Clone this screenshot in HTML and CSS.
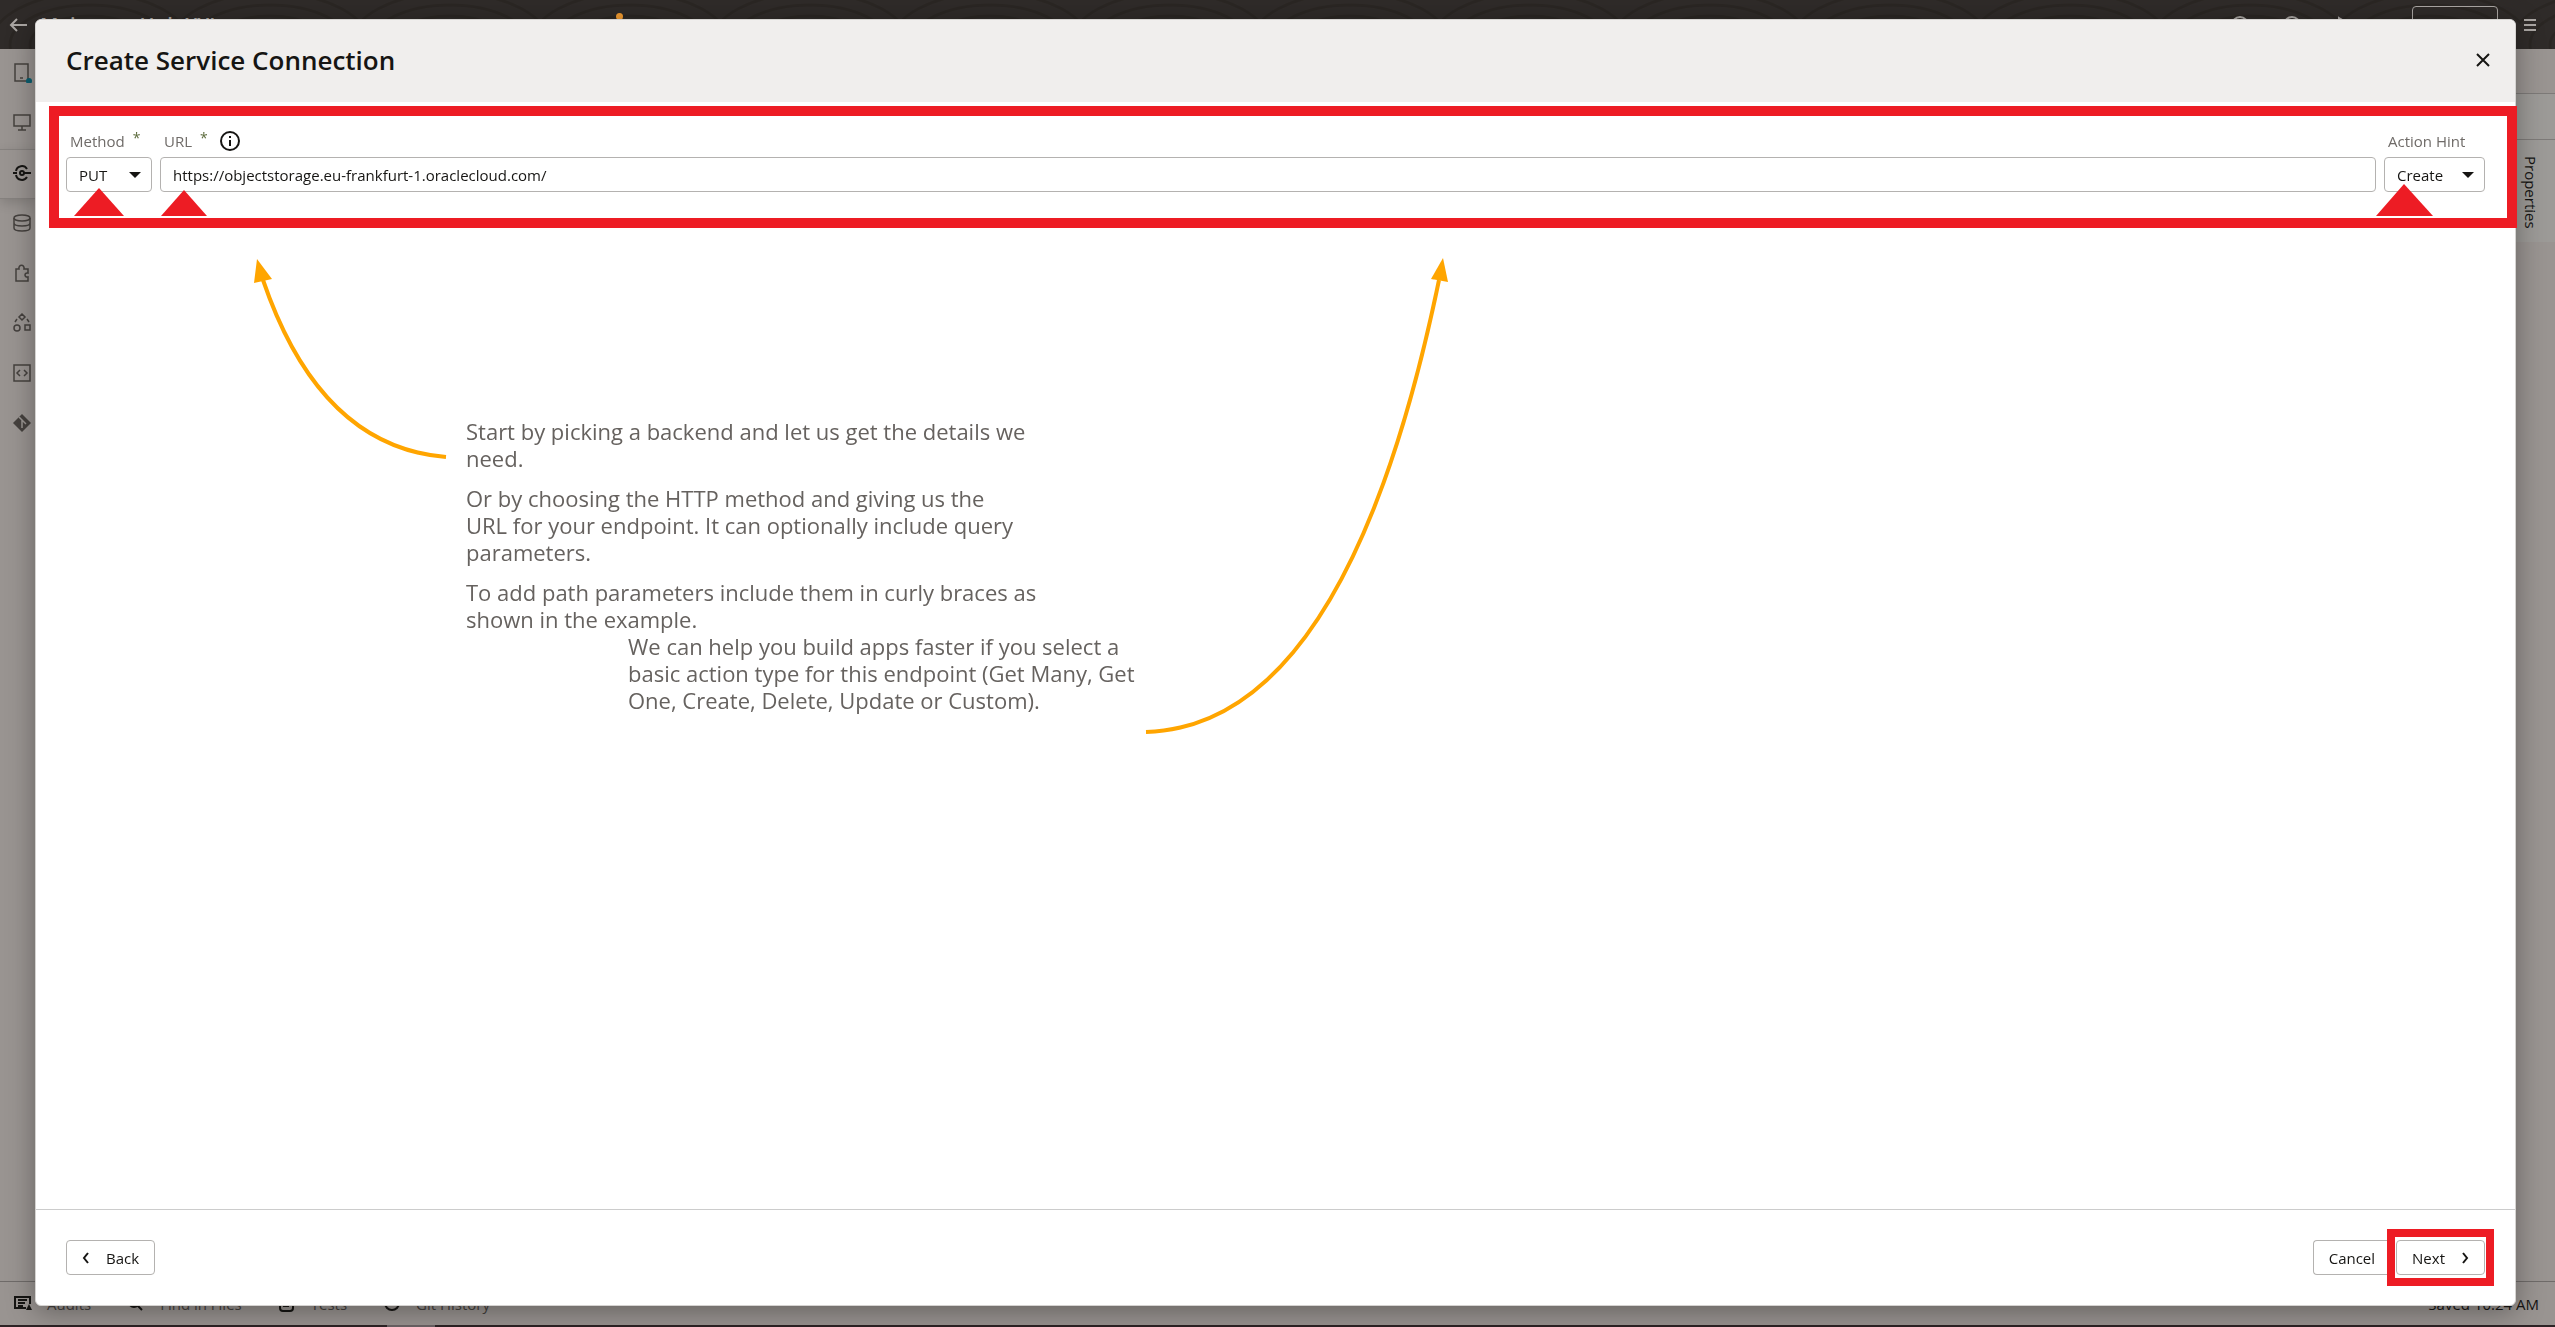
FILE: index.html
```html
<!DOCTYPE html>
<html lang="en">
<head>
<meta charset="utf-8">
<title>Create Service Connection</title>
<link rel="stylesheet" href="styles.css">
</head>
<body>
<div class="app">
  <header class="topbar">
    <svg class="topo" aria-hidden="true"><defs><pattern id="topo" width="180" height="90" patternUnits="userSpaceOnUse"><g fill="none" stroke="#2a2623" stroke-width="3"><ellipse cx="90" cy="45" rx="20" ry="9"/><ellipse cx="90" cy="45" rx="40" ry="19"/><ellipse cx="90" cy="45" rx="60" ry="29"/><ellipse cx="90" cy="45" rx="80" ry="40"/><ellipse cx="90" cy="45" rx="100" ry="52"/></g></pattern></defs><rect width="100%" height="100%" fill="url(#topo)" stroke="none"/></svg>
    <button class="icon-btn" aria-label="Back"><svg width="20" height="16" viewBox="0 0 20 16"><path d="M19 8H3M9 2L3 8l6 6"/></svg></button>
    <span class="app-name">Mainzone Hub XYL</span>
    <i class="status-dot"></i>
    <div class="top-actions">
      <svg width="20" height="20" viewBox="0 0 20 20"><circle cx="5" cy="10" r="5"/></svg>
      <svg width="20" height="20" viewBox="0 0 20 20"><circle cx="10" cy="10" r="8"/></svg>
      <svg width="20" height="20" viewBox="0 0 20 20"><circle cx="10" cy="10" r="8"/></svg>
      <svg width="20" height="20" viewBox="0 0 20 20"><path d="M5 3l12 7-12 7z"/></svg>
      <i class="top-box"></i>
      <button class="icon-btn" aria-label="Menu"><svg width="14" height="14" viewBox="0 0 14 14"><path d="M1 2h12M1 7h12M1 12h12"/></svg></button>
    </div>
  </header>
  <div class="workspace">
    <nav class="rail">
      <a href="#" aria-label="Mobile" class="rail-item"><svg viewBox="0 0 20 20"><path d="M3 1h13v17H3zM8 15h3"/><circle class="teal" cx="17" cy="18" r="3"/></svg></a>
      <a href="#" aria-label="Web" class="rail-item"><svg viewBox="0 0 20 20"><path d="M2 2h16v11H2zM10 13v4M6 17h8"/></svg></a>
      <a href="#" aria-label="Services" class="rail-item active"><svg viewBox="0 0 20 20"><path d="M15 6a6 6 0 0 0-11 2M4 12a6 6 0 0 0 11 2M1 10h4M12 10h7"/><circle cx="10" cy="10" r="2"/></svg></a>
      <a href="#" aria-label="Data" class="rail-item"><svg viewBox="0 0 20 20"><ellipse cx="10" cy="5" rx="8" ry="3"/><path d="M2 5v10c0 4 16 4 16 0V5M2 10c0 4 16 4 16 0"/></svg></a>
      <a href="#" aria-label="Components" class="rail-item"><svg viewBox="0 0 20 20"><path d="M4 6h3c-1-5 6-5 5 0h4v4c-4-1-4 5 0 4v4H4z"/></svg></a>
      <a href="#" aria-label="Processes" class="rail-item"><svg viewBox="0 0 20 20"><path d="M10 1l3 3-3 3-3-3zM13 12h5v5h-5zM5 6L3 9M15 6l2 3"/><circle cx="5" cy="15" r="3"/></svg></a>
      <a href="#" aria-label="Source" class="rail-item"><svg viewBox="0 0 20 20"><path d="M2 2h16v16H2zM8 7l-3 3 3 3M12 7l3 3-3 3"/></svg></a>
      <a href="#" aria-label="Git" class="rail-item"><svg viewBox="0 0 20 20"><path class="solid" d="M10 1l9 9-9 9-9-9z"/><path class="cut" d="M7 4l3 3v8M10 7l4 4"/></svg></a>
    </nav>
    <aside class="side-tabs">
      <div class="tab-gap"></div>
      <div class="tab-blank"></div>
      <button class="side-tab">Properties</button>
    </aside>
  </div>
  <footer class="statusbar">
    <a href="#"><svg width="18" height="18" viewBox="0 0 18 18"><path d="M12 13H1V2h15v7M4 5h9M4 8h7M4 11h5"/><path class="ink" d="M15 9l3 6h-6z"/></svg>Audits</a>
    <a href="#"><svg width="18" height="18" viewBox="0 0 18 18"><circle cx="7" cy="7" r="5"/><path d="M10 10l5 5"/></svg>Find in Files</a>
    <a href="#"><svg width="18" height="18" viewBox="0 0 18 18"><rect x="2" y="3" width="13" height="13" rx="3"/><path d="M5 11h6"/></svg>Tests</a>
    <a href="#"><svg width="18" height="18" viewBox="0 0 18 18"><circle cx="9" cy="8" r="7"/></svg>Git History</a>
    <span class="saved">Saved 10:24 AM</span>
  </footer>
  <div class="taskbar"><i></i></div>
</div>

<main class="dialog" role="dialog" aria-labelledby="title">
  <header class="dialog-head">
    <h1 id="title">Create Service Connection</h1>
    <button class="close" aria-label="Close"><svg width="14" height="14" viewBox="0 0 14 14"><path d="M1 1l12 12M13 1L1 13"/></svg></button>
  </header>
  <section class="dialog-body">
    <div class="endpoint">
      <div class="field method">
        <label for="method">Method<sup>*</sup></label>
        <div class="select"><select id="method"><option>PUT</option><option>GET</option><option>POST</option></select></div>
        <svg class="pointer" width="50" height="28" viewBox="0 0 50 28"><path d="M25 0l25 28H0z"/></svg>
      </div>
      <div class="field url">
        <label for="url">URL<sup>*</sup><svg class="info" width="20" height="20" viewBox="0 0 20 20"><circle cx="10" cy="10" r="9"/><path d="M10 9v6M10 5v2"/></svg></label>
        <input id="url" type="text" value="https://objectstorage.eu-frankfurt-1.oraclecloud.com/">
        <svg class="pointer" width="46" height="26" viewBox="0 0 46 26"><path d="M23 0l23 26H0z"/></svg>
      </div>
      <div class="field hint">
        <label for="hint">Action Hint</label>
        <div class="select"><select id="hint"><option>Create</option><option>Get Many</option><option>Get One</option></select></div>
        <svg class="pointer" width="57" height="32" viewBox="0 0 57 32"><path d="M28 0l29 32H0z"/></svg>
      </div>
    </div>
    <div class="guide">
      <svg class="arrows" width="1500" height="500" viewBox="0 0 1500 500" aria-hidden="true">
        <path d="M411 229Q285 219 228 52"/><path class="tip" d="M222 31l15 20-18 4z"/>
        <path d="M1111 504Q1312 498 1404 52"/><path class="tip" d="M1408 30l5 24-17-3z"/>
      </svg>
      <div class="guide-start">
        <p>Start by picking a backend and let us get the details we need.</p>
        <p>Or by choosing the HTTP method and giving us the URL&nbsp;for your endpoint. It can optionally include query parameters.</p>
        <p>To add path parameters include them in curly braces as shown in the example.</p>
      </div>
      <p class="guide-hint">We can help you build apps faster if you select a basic action type for this endpoint (Get Many, Get One, Create, Delete, Update or Custom).</p>
    </div>
  </section>
  <footer class="dialog-foot">
    <button class="btn"><svg width="8" height="12" viewBox="0 0 8 12"><path d="M6 1L2 6l4 5"/></svg>Back</button>
    <div class="foot-right">
      <button class="btn cancel">Cancel</button>
      <span class="callout"><button class="btn">Next<svg width="8" height="12" viewBox="0 0 8 12"><path d="M2 1l4 5-4 5"/></svg></button></span>
    </div>
  </footer>
</main>
</body>
</html>
```
FILE: styles.css
```css
* { box-sizing: border-box; }
:root { --red: #ed1c24; --ink: #161513; --line: #b4b2b0; }
body { margin: 0; font: 16px/20px "Open Sans", "Noto Sans", sans-serif; color: var(--ink); }
a { color: inherit; text-decoration: none; }
p, h1 { margin: 0; }
button { font: inherit; color: inherit; cursor: pointer; }
svg { fill: none; stroke: currentColor; stroke-width: 2; flex: none; }

.app { display: flex; flex-direction: column; height: 100vh; background: #999491; }
.topbar { position: relative; display: flex; align-items: center; height: 49px; padding: 0 18px 0 8px; background: #2f2b29; color: #aaa6a3; overflow: hidden; }
.topo { position: absolute; inset: 0; width: 100%; height: 100%; }
.icon-btn { position: relative; display: flex; padding: 0; border: 0; background: none; }
.app-name { position: relative; margin-left: 12px; font-size: 20px; font-weight: 600; line-height: 24px; }
.status-dot { position: absolute; left: 616px; top: 13px; width: 7px; height: 7px; border-radius: 50%; background: #f09a30; }
.top-actions { position: relative; display: flex; align-items: center; gap: 32px; margin-left: auto; }
.top-box { width: 86px; height: 38px; margin: 0 -7px 0 26px; border: 1px solid #aaa6a3; border-radius: 4px; }

.workspace { flex: 1; display: flex; justify-content: space-between; }
.rail { width: 35px; }
.rail-item { display: flex; justify-content: center; align-items: center; height: 50px; padding: 0 0 3px 9px; color: #45413e; }
.rail-item svg { width: 20px; height: 20px; stroke-width: 1.5; }
.rail-item .teal { fill: #0b5f70; stroke: none; }
.rail-item .solid { fill: #45413e; stroke: none; }
.rail-item .cut { stroke: #999491; }
.rail-item.active { color: var(--ink); border-top: 1px solid #85817e; border-bottom: 1px solid #85817e; box-shadow: 0 4px 12px rgba(0,0,0,.15); }
.rail-item.active svg { stroke-width: 2; }
.side-tabs { width: 39px; }
.tab-gap { height: 44px; }
.tab-blank { height: 46px; background: #9c9a97; border-top: 1px solid #7d7a78; }
.side-tab { display: flex; align-items: center; justify-content: center; width: 39px; height: 103px; padding: 2px 10px 0 0; border: 0; border-top: 1px solid #7d7a78; background: #9c9a97; font-size: 15px; writing-mode: vertical-rl; }
.statusbar { display: flex; align-items: center; gap: 36px; height: 44px; padding: 0 16px 0 14px; border-top: 1px solid #6f6b69; font-size: 15px; }
.statusbar a { display: flex; align-items: center; gap: 15px; color: #45413e; }
.statusbar svg { color: var(--ink); }
.statusbar .ink { fill: var(--ink); stroke: none; }
.saved { margin-left: auto; }
.taskbar { height: 2px; padding-left: 387px; background: #2d2325; }
.taskbar i { display: block; width: 48px; height: 2px; background: #6b6365; }

.dialog { position: fixed; inset: 19px 39px 21px 35px; display: flex; flex-direction: column; background: #fff; border-radius: 6px; border: 1px solid #d5d3d1; box-shadow: 0 6px 28px rgba(0,0,0,.35); }
.dialog-head { display: flex; justify-content: space-between; align-items: center; height: 82px; padding: 0 25px 2px 30px; background: #f0eeed; border-radius: 6px 6px 0 0; }
h1 { font-size: 26px; line-height: 32px; font-weight: 600; }
.close { display: flex; padding: 0; border: 0; background: none; }
.dialog-body { flex: 1; padding: 4px 0 0 13px; }
.endpoint { display: flex; gap: 8px; height: 122px; margin-right: -2px; border: 10px solid var(--red); padding: 14px 22px 0 7px; }
.field { position: relative; display: flex; flex-direction: column; gap: 6px; }
label { display: flex; align-items: center; height: 21px; padding-left: 4px; color: #6f6b68; font-size: 15px; }
sup { align-self: flex-start; margin-left: 8px; font-size: 14px; line-height: 16px; color: #5c6b3c; }
.info { margin-left: 12px; color: var(--ink); }
.url { flex: 1; }
.method { width: 86px; }
.hint { width: 101px; }
.select { position: relative; }
.select::after { content: ""; position: absolute; right: 11px; top: 15px; border: 6px solid transparent; border-top-color: var(--ink); border-bottom: 0; }
select, input { width: 100%; height: 35px; padding: 0 12px; border: 1px solid var(--line); border-radius: 4px; background: #fff; color: var(--ink); font: inherit; font-size: 15px; appearance: none; }
.pointer { position: absolute; left: 8px; bottom: 2px; fill: var(--red); stroke: none; }
.url .pointer { left: 1px; }
.hint .pointer { left: -8px; }
.guide { position: relative; padding: 190px 0 0 417px; font-size: 22px; line-height: 27px; color: #66625f; }
.arrows { position: absolute; left: -14px; top: 0; color: #ffa500; stroke-width: 4; overflow: visible; }
.arrows .tip { fill: #ffa500; stroke: none; }
.guide-start { width: 572px; display: flex; flex-direction: column; gap: 13px; }
.guide-hint { width: 510px; margin-left: 162px; }
.dialog-foot { display: flex; justify-content: space-between; align-items: center; height: 96px; padding: 0 21px 0 30px; border-top: 1px solid #ccc; }
.foot-right { display: flex; align-items: center; }
.btn { display: flex; align-items: center; justify-content: center; gap: 16px; height: 35px; padding: 0 15px; border: 1px solid var(--line); border-radius: 4px; background: #fff; font-size: 15px; font-weight: 500; }
.cancel { border-right: 0; border-radius: 4px 0 0 4px; padding-right: 12px; }
.callout { border: 8px solid var(--red); padding: 3px 1px; }
```
